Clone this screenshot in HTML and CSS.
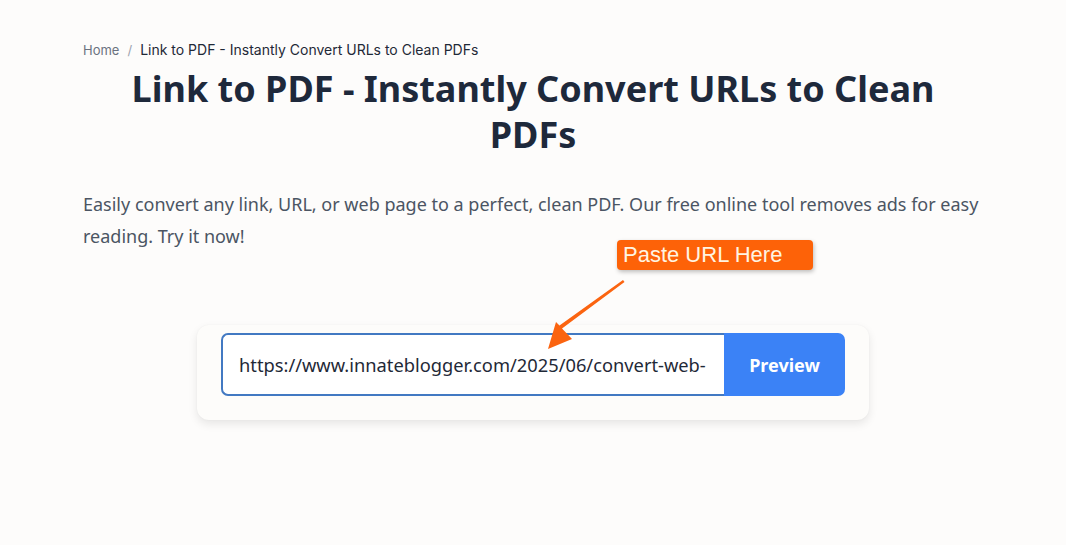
FILE: index.html
```html
<!DOCTYPE html>
<html lang="en">
<head>
<meta charset="utf-8">
<title>Link to PDF - Instantly Convert URLs to Clean PDFs</title>
<link rel="stylesheet" href="styles.css">
</head>
<body>
<main class="page">
  <nav class="crumbs">
    <a class="crumb-home" href="#">Home</a>
    <span class="crumb-sep">/</span>
    <span class="crumb-current">Link to PDF - Instantly Convert URLs to Clean PDFs</span>
  </nav>
  <h1 class="title">Link to PDF - Instantly Convert URLs to Clean PDFs</h1>
  <p class="lead">Easily convert any link, URL, or web page to a perfect, clean PDF. Our free online tool removes ads for easy reading. Try it now!</p>
  <section class="card">
    <form class="url-form">
      <input class="url-input" type="text" value="https://www.innateblogger.com/2025/06/convert-web-">
      <button class="preview-btn" type="button">Preview</button>
    </form>
  </section>
</main>
<div class="callout">Paste URL Here</div>
<svg class="callout-arrow" width="90" height="70" viewBox="0 0 90 70">
  <path d="M88 2 L89.5 4 L27 50.5 L37 61 L13 71 L21 44 L24.5 47.5 Z" fill="#fb6410"/>
</svg>
</body>
</html>
```
FILE: styles.css
```css
html, body {
  margin: 0;
  padding: 0;
}
body {
  background: #fdfcfb;
  font-family: "Noto Sans", "Open Sans", sans-serif;
  color: #1f2937;
  min-height: 545px;
  position: relative;
}
.page {
  max-width: 900px;
  margin: 0 auto;
  padding-top: 40px;
}
.crumbs {
  font-family: Inter, "Noto Sans", sans-serif;
  font-size: 14px;
  line-height: 20px;
  display: flex;
  gap: 8px;
  align-items: center;
}
.crumb-home {
  color: #6b7280;
  text-decoration: none;
  font-size: 13px;
}
.crumb-sep {
  color: #9ca3af;
  font-size: 13px;
}
.crumb-current {
  color: #1f2937;
}
.title {
  margin: 6px 0 0;
  padding: 0 40px;
  text-align: center;
  font-size: 36px;
  line-height: 46px;
  font-weight: 700;
  color: #1e293b;
}
.lead {
  margin: 30px 0 0;
  font-size: 18px;
  line-height: 32px;
  color: #4b5563;
}
.card {
  width: 624px;
  margin: 73px auto 0;
  padding: 8px 24px 24px;
  background: #fdfcfa;
  border-radius: 12px;
  box-shadow: 0 4px 10px rgba(0, 0, 0, 0.09), 0 0 2px rgba(0, 0, 0, 0.04);
}
.url-form {
  display: flex;
  height: 63px;
  margin: 0;
}
.url-input {
  flex: 1;
  min-width: 0;
  box-sizing: border-box;
  height: 63px;
  margin: 0;
  padding: 0 16px;
  border: 2px solid #4279c2;
  border-right: none;
  border-radius: 7px 0 0 7px;
  background: #ffffff;
  font-family: "Noto Sans", sans-serif;
  font-size: 18.3px;
  color: #1f2937;
  outline: none;
}
.preview-btn {
  width: 121px;
  height: 63px;
  margin: 0;
  border: none;
  border-radius: 0 7px 7px 0;
  background: #3b82f6;
  color: #ffffff;
  font-family: "Noto Sans", sans-serif;
  font-weight: 700;
  font-size: 18px;
  cursor: pointer;
}
.callout {
  position: absolute;
  left: 617px;
  top: 240px;
  width: 196px;
  height: 30px;
  box-sizing: border-box;
  padding-left: 6px;
  background: #fd6208;
  border-radius: 4px;
  box-shadow: 1px 2px 4px rgba(0, 0, 0, 0.25);
  color: #fff4e2;
  font-family: "Liberation Sans", Arial, sans-serif;
  font-size: 22px;
  line-height: 30px;
}
.callout-arrow {
  position: absolute;
  left: 535px;
  top: 278px;
  overflow: visible;
}
```
